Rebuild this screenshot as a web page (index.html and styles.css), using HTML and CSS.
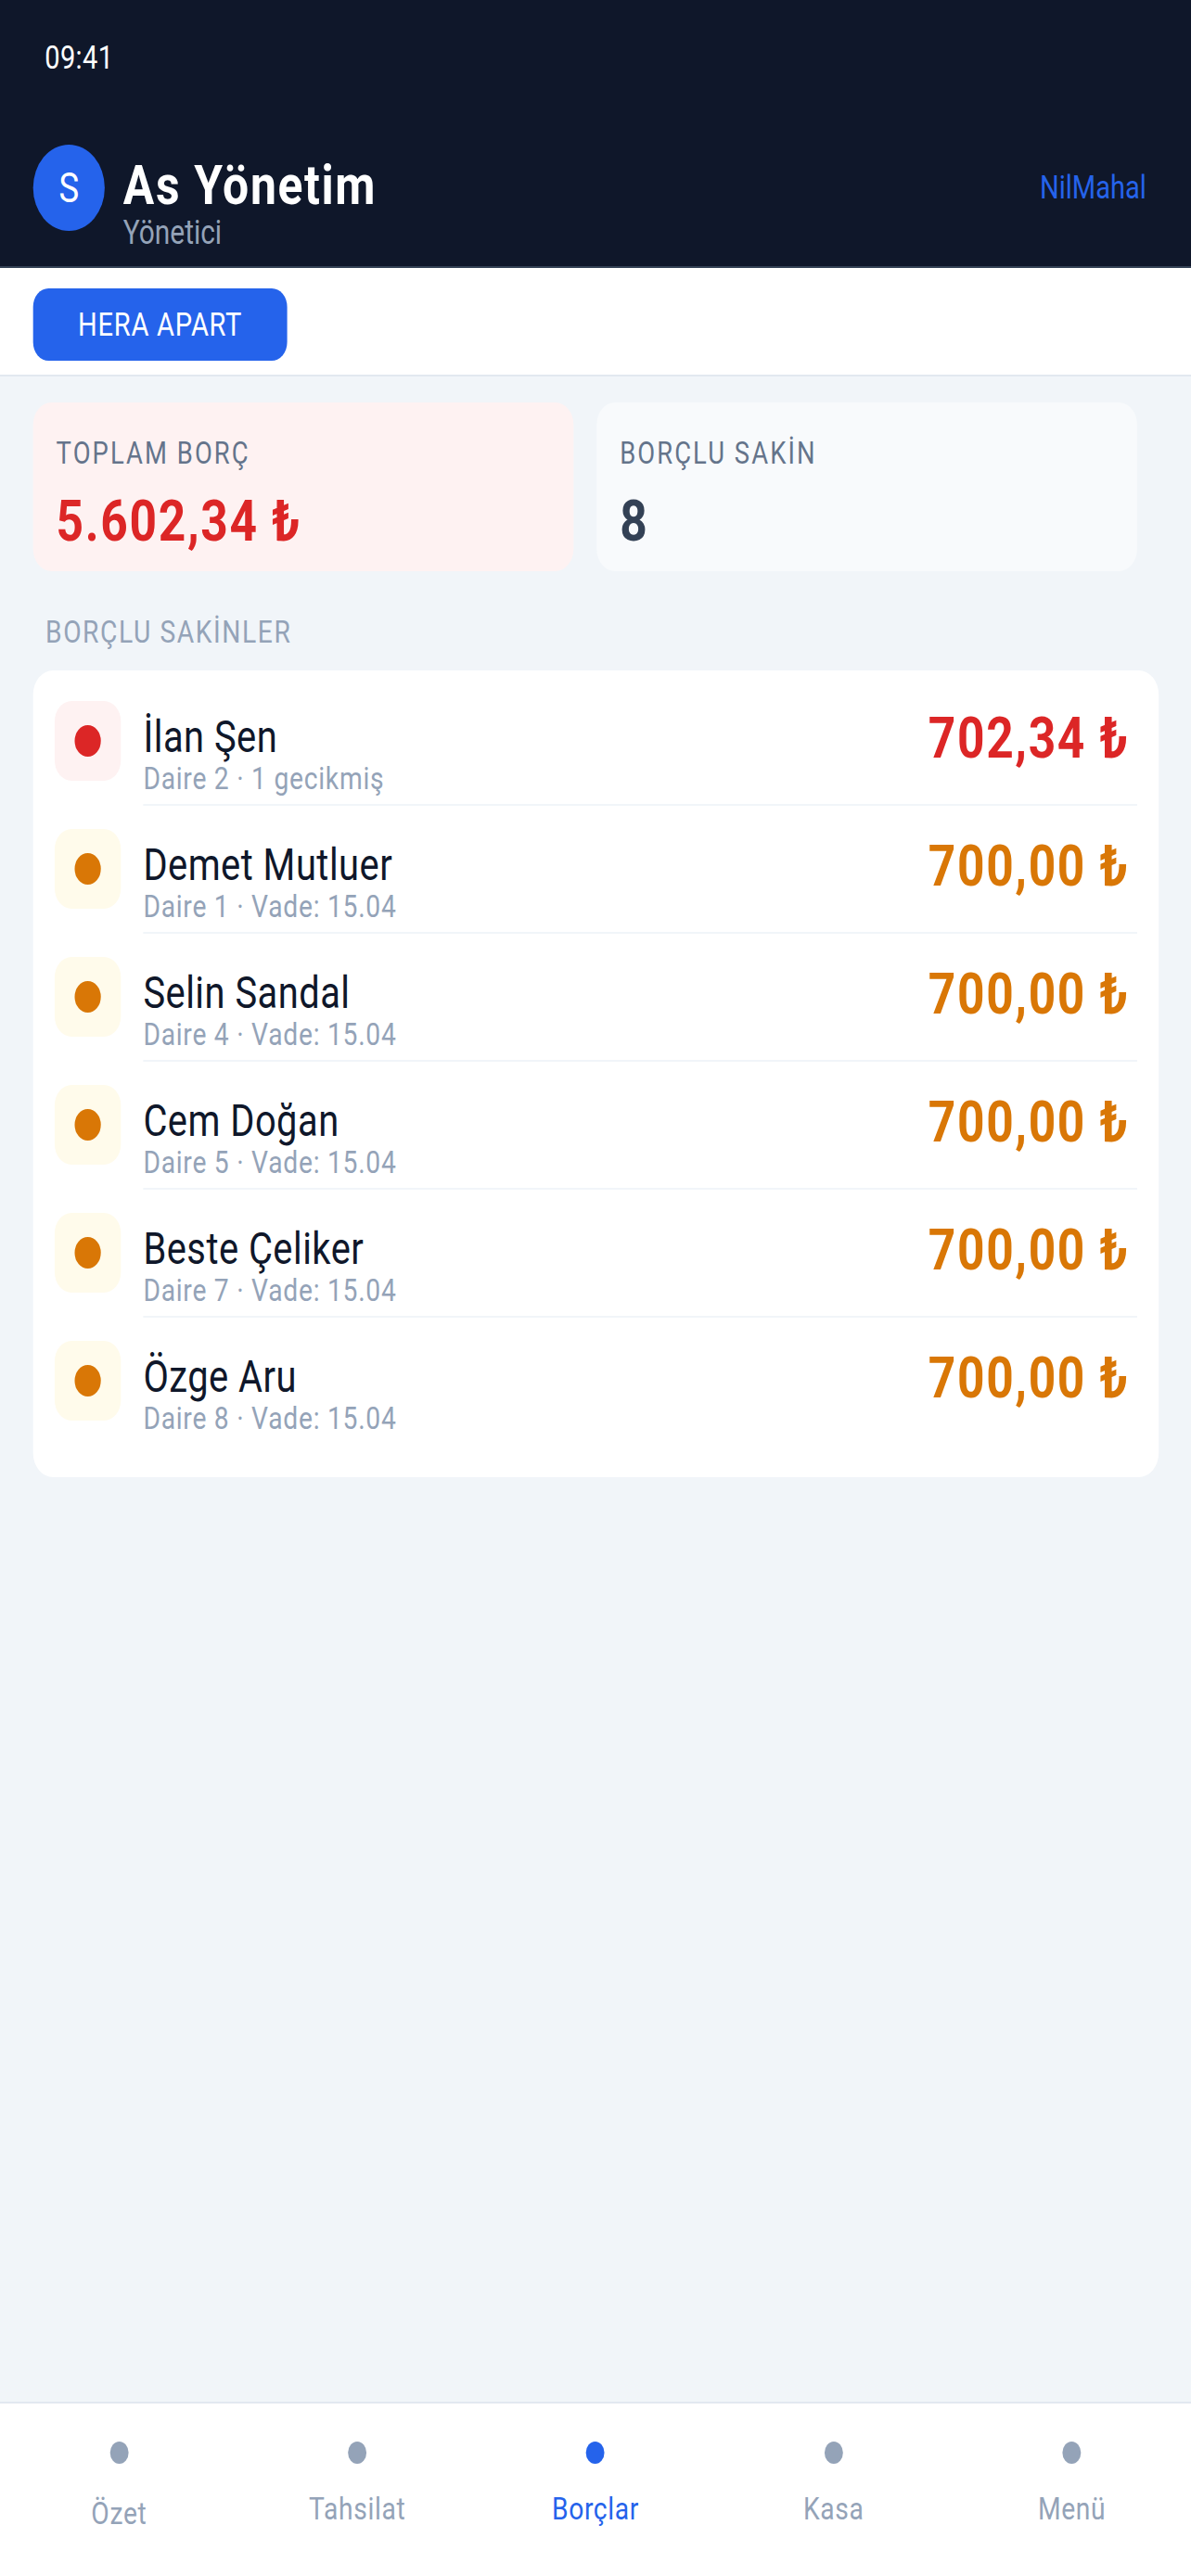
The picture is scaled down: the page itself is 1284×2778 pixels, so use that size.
FILE: index.html
```html
<!DOCTYPE html>
<html lang="tr">
<head>
<meta charset="utf-8">
<title>Borçlar</title>
<link rel="stylesheet" href="styles.css">
</head>
<body>
<div class="screen">
  <header class="topbar">
    <div class="status">09:41</div>
    <div class="brand-row">
      <div class="avatar">S</div>
      <div class="brand-text">
        <div class="brand-title">As Yönetim</div>
        <div class="brand-role">Yönetici</div>
      </div>
      <div class="brand-link">NilMahal</div>
    </div>
  </header>

  <div class="site-bar">
    <button class="site-chip">HERA APART</button>
  </div>

  <main class="content">
    <section class="stats">
      <div class="stat stat-danger">
        <div class="stat-label">TOPLAM BORÇ</div>
        <div class="stat-value value-danger">5.602,34 ₺</div>
      </div>
      <div class="stat stat-neutral">
        <div class="stat-label">BORÇLU SAKİN</div>
        <div class="stat-value value-neutral">8</div>
      </div>
    </section>

    <div class="section-label">BORÇLU SAKİNLER</div>

    <section class="list">
      <div class="row">
        <div class="badge badge-red"><span class="dot dot-red"></span></div>
        <div class="row-main">
          <div class="row-text">
            <div class="row-name">İlan Şen</div>
            <div class="row-sub">Daire 2 · 1 gecikmiş</div>
          </div>
          <div class="row-amount amount-red">702,34 ₺</div>
        </div>
      </div>
      <div class="row">
        <div class="badge badge-amber"><span class="dot dot-amber"></span></div>
        <div class="row-main">
          <div class="row-text">
            <div class="row-name">Demet Mutluer</div>
            <div class="row-sub">Daire 1 · Vade: 15.04</div>
          </div>
          <div class="row-amount amount-amber">700,00 ₺</div>
        </div>
      </div>
      <div class="row">
        <div class="badge badge-amber"><span class="dot dot-amber"></span></div>
        <div class="row-main">
          <div class="row-text">
            <div class="row-name">Selin Sandal</div>
            <div class="row-sub">Daire 4 · Vade: 15.04</div>
          </div>
          <div class="row-amount amount-amber">700,00 ₺</div>
        </div>
      </div>
      <div class="row">
        <div class="badge badge-amber"><span class="dot dot-amber"></span></div>
        <div class="row-main">
          <div class="row-text">
            <div class="row-name">Cem Doğan</div>
            <div class="row-sub">Daire 5 · Vade: 15.04</div>
          </div>
          <div class="row-amount amount-amber">700,00 ₺</div>
        </div>
      </div>
      <div class="row">
        <div class="badge badge-amber"><span class="dot dot-amber"></span></div>
        <div class="row-main">
          <div class="row-text">
            <div class="row-name">Beste Çeliker</div>
            <div class="row-sub">Daire 7 · Vade: 15.04</div>
          </div>
          <div class="row-amount amount-amber">700,00 ₺</div>
        </div>
      </div>
      <div class="row">
        <div class="badge badge-amber"><span class="dot dot-amber"></span></div>
        <div class="row-main">
          <div class="row-text">
            <div class="row-name">Özge Aru</div>
            <div class="row-sub">Daire 8 · Vade: 15.04</div>
          </div>
          <div class="row-amount amount-amber">700,00 ₺</div>
        </div>
      </div>
    </section>
  </main>

  <nav class="tabbar">
    <div class="tab"><span class="tab-dot"></span><span class="tab-label tab-label-low">Özet</span></div>
    <div class="tab"><span class="tab-dot"></span><span class="tab-label">Tahsilat</span></div>
    <div class="tab tab-active"><span class="tab-dot"></span><span class="tab-label">Borçlar</span></div>
    <div class="tab"><span class="tab-dot"></span><span class="tab-label">Kasa</span></div>
    <div class="tab"><span class="tab-dot"></span><span class="tab-label">Menü</span></div>
  </nav>
</div>
</body>
</html>
```
FILE: styles.css
```css
html, body {
  margin: 0;
  padding: 0;
  background: #f1f5f9;
  overflow: hidden;
}

body {
  font-family: Roboto, "Noto Sans", "Liberation Sans", sans-serif;
}

/* The capture is horizontally condensed: lay out on a wider frame and squeeze it. */
.screen {
  width: 1547px;
  height: 2778px;
  transform: scaleX(0.83);
  transform-origin: 0 0;
  display: flex;
  flex-direction: column;
  background: #f1f5f9;
}

/* ---------- header ---------- */
.topbar {
  background: #0f172a;
  padding: 43px 58px 16px 43px;
}

.status {
  color: #ffffff;
  font-size: 35px;
  line-height: 40px;
  margin-left: 15px;
  letter-spacing: 0.5px;
}

.brand-row {
  display: flex;
  align-items: flex-start;
  margin-top: 73px;
}

.avatar {
  width: 93px;
  height: 93px;
  border-radius: 50%;
  background: #2563eb;
  color: #ffffff;
  font-size: 44px;
  display: flex;
  align-items: center;
  justify-content: center;
  flex-shrink: 0;
}

.brand-text {
  margin-left: 24px;
  margin-top: 13px;
  flex: 1;
}

.brand-title {
  color: #ffffff;
  font-size: 60px;
  font-weight: 700;
  line-height: 62px;
  letter-spacing: 2px;
}

.brand-role {
  color: #94a3b8;
  font-size: 36px;
  line-height: 40px;
}

.brand-link {
  color: #2563eb;
  font-size: 35px;
  line-height: 40px;
  margin-top: 27px;
}

/* ---------- site chip bar ---------- */
.site-bar {
  background: #ffffff;
  border-top: 2px solid #334155;
  padding: 22px 43px 15px;
  border-bottom: 2px solid #e2e8f0;
}

.site-chip {
  display: flex;
  align-items: center;
  justify-content: center;
  height: 78px;
  width: 330px;
  border: none;
  border-radius: 20px;
  background: #2563eb;
  color: #ffffff;
  font-family: inherit;
  font-size: 35px;
  letter-spacing: 0.9px;
  padding: 0;
}

/* ---------- content ---------- */
.content {
  flex: 1;
  padding: 28px 42px 0 43px;
}

.stats {
  display: grid;
  grid-template-columns: 1fr 1fr;
  gap: 30px;
  padding-right: 28px;
}

.stat {
  border-radius: 24px;
  padding: 35px 30px 18px;
}

.stat-danger { background: #fef2f2; }
.stat-neutral { background: #f8fafc; }

.stat-label {
  color: #64748b;
  font-size: 33px;
  line-height: 40px;
  letter-spacing: 2.5px;
}

.stat-value {
  margin-top: 17px;
  font-size: 62px;
  line-height: 72px;
  font-weight: 700;
  letter-spacing: 2px;
}

.value-danger { color: #dc2626; }
.value-neutral { color: #334155; }

.section-label {
  color: #94a3b8;
  font-size: 34px;
  line-height: 40px;
  letter-spacing: 1.9px;
  margin: 45px 0 22px 16px;
}

.list {
  background: #ffffff;
  border-radius: 26px;
  padding: 8px 28px 36px;
}

.row {
  display: flex;
  align-items: flex-start;
  gap: 29px;
  padding-top: 25px;
}

.badge {
  width: 86px;
  height: 86px;
  border-radius: 22px;
  display: flex;
  align-items: center;
  justify-content: center;
  flex-shrink: 0;
}

.badge-red { background: #fef2f2; }
.badge-amber { background: #fffbeb; }

.dot {
  width: 34px;
  height: 34px;
  border-radius: 50%;
}

.dot-red { background: #dc2626; }
.dot-amber { background: #d97706; }

.row-main {
  flex: 1;
  display: flex;
  align-items: flex-start;
  justify-content: space-between;
  padding: 14px 0 9px;
  border-bottom: 2px solid #f1f5f9;
}

.row:last-child .row-main {
  border-bottom: none;
}

.row-name {
  color: #0f172a;
  font-size: 48px;
  line-height: 50px;
  font-weight: 400;
  letter-spacing: 0.6px;
}

.row-sub {
  color: #94a3b8;
  font-size: 34px;
  line-height: 38px;
  letter-spacing: 0.9px;
}

.row-amount {
  font-size: 62px;
  line-height: 52px;
  font-weight: 700;
  letter-spacing: 2px;
  padding-right: 10px;
}

.amount-red { color: #dc2626; }
.amount-amber { color: #d97706; }

/* ---------- tab bar ---------- */
.tabbar {
  background: #ffffff;
  border-top: 2px solid #e2e8f0;
  display: grid;
  grid-template-columns: repeat(5, 1fr);
  padding: 41px 0 53px;
}

.tab {
  display: flex;
  flex-direction: column;
  align-items: center;
  gap: 28px;
}

.tab-dot {
  width: 24px;
  height: 24px;
  border-radius: 50%;
  background: #94a3b8;
}

.tab-label {
  color: #94a3b8;
  font-size: 34px;
  line-height: 40px;
  letter-spacing: 0.8px;
}

.tab-label-low {
  margin-top: 5px;
  margin-bottom: -5px;
}

.tab-active .tab-dot { background: #2563eb; }
.tab-active .tab-label { color: #2563eb; }
```
